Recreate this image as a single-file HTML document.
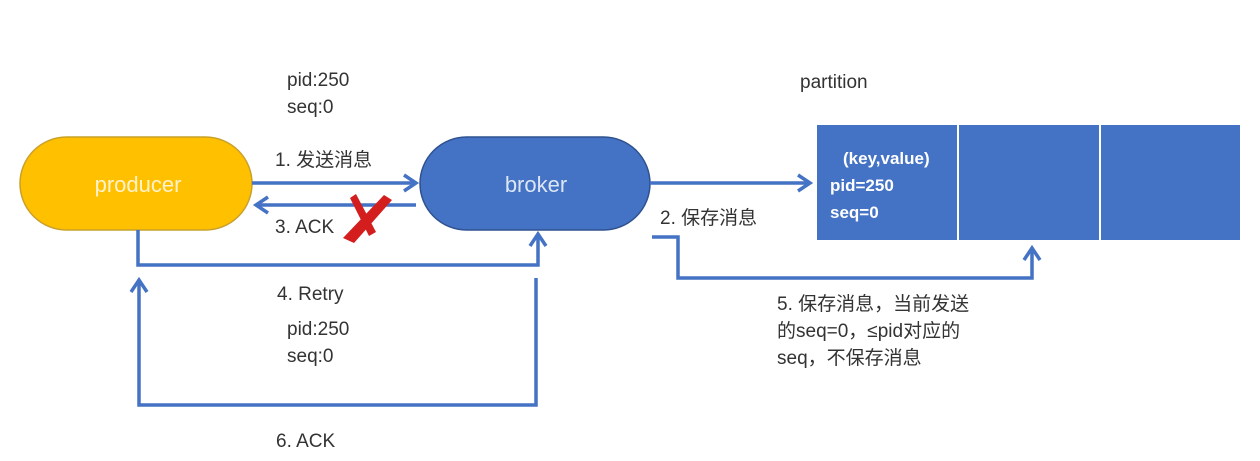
<!DOCTYPE html>
<html><head><meta charset="utf-8"><style>
html,body{margin:0;padding:0;background:#fff;}
svg{display:block;}
text{font-family:"Liberation Sans","Noto Sans CJK SC",sans-serif;}
</style></head><body>
<svg width="1260" height="461" viewBox="0 0 1260 461" xmlns="http://www.w3.org/2000/svg">
<rect width="1260" height="461" fill="#fff"/>
<rect x="20" y="137" width="232" height="93" rx="46.5" fill="#FFC000" stroke="#C9A02A" stroke-width="1.5"/>
<text x="138" y="192" font-size="22" fill="#FFF2CC" text-anchor="middle">producer</text>
<rect x="420" y="137" width="230" height="93" rx="46.5" fill="#4472C4" stroke="#2F528F" stroke-width="1.5"/>
<text x="536" y="192" font-size="22" fill="#DCE6F5" text-anchor="middle">broker</text>
<rect x="817" y="125" width="140" height="115" fill="#4472C4"/>
<rect x="959" y="125" width="140" height="115" fill="#4472C4"/>
<rect x="1101" y="125" width="139" height="115" fill="#4472C4"/>
<g font-size="17" font-weight="bold" fill="#fff">
<text x="843" y="164">(key,value)</text>
<text x="830" y="191">pid=250</text>
<text x="830" y="218">seq=0</text>
</g>
<g fill="none" stroke="#4472C4" stroke-width="3.5" stroke-linejoin="miter">
<path d="M252 183 H416"/><path d="M404 175 L416 183 L404 191"/>
<path d="M416 205 H256"/><path d="M268 197 L256 205 L268 213"/>
<path d="M650 183 H810"/><path d="M798 175 L810 183 L798 191"/>
<path d="M138 230 V265 H538 V234"/><path d="M530 246 L538 234 L546 246"/>
<path d="M652 237 H678 V278 H1032 V248"/><path d="M1024 260 L1032 248 L1040 260"/>
<path d="M536 278 V405 H139 V280"/><path d="M131 292 L139 280 L147 292"/>
</g>
<path d="M350 198 L356 194 L376 232 L369 236 Z" fill="#D41E1E"/>
<path d="M384 195 L392 200 L354 243 L343 238 Z" fill="#D41E1E"/>
<g font-size="19" fill="#333">
<text x="287" y="86">pid:250</text>
<text x="287" y="113">seq:0</text>
<text x="800" y="88">partition</text>
<text x="275" y="166">1. 发送消息</text>
<text x="275" y="233">3. ACK</text>
<text x="660" y="224">2. 保存消息</text>
<text x="277" y="300">4. Retry</text>
<text x="287" y="335">pid:250</text>
<text x="287" y="362">seq:0</text>
<text x="777" y="310">5. 保存消息，当前发送</text>
<text x="777" y="337">的seq=0，≤pid对应的</text>
<text x="777" y="364">seq，不保存消息</text>
<text x="276" y="447">6. ACK</text>
</g>
</svg>
</body></html>
